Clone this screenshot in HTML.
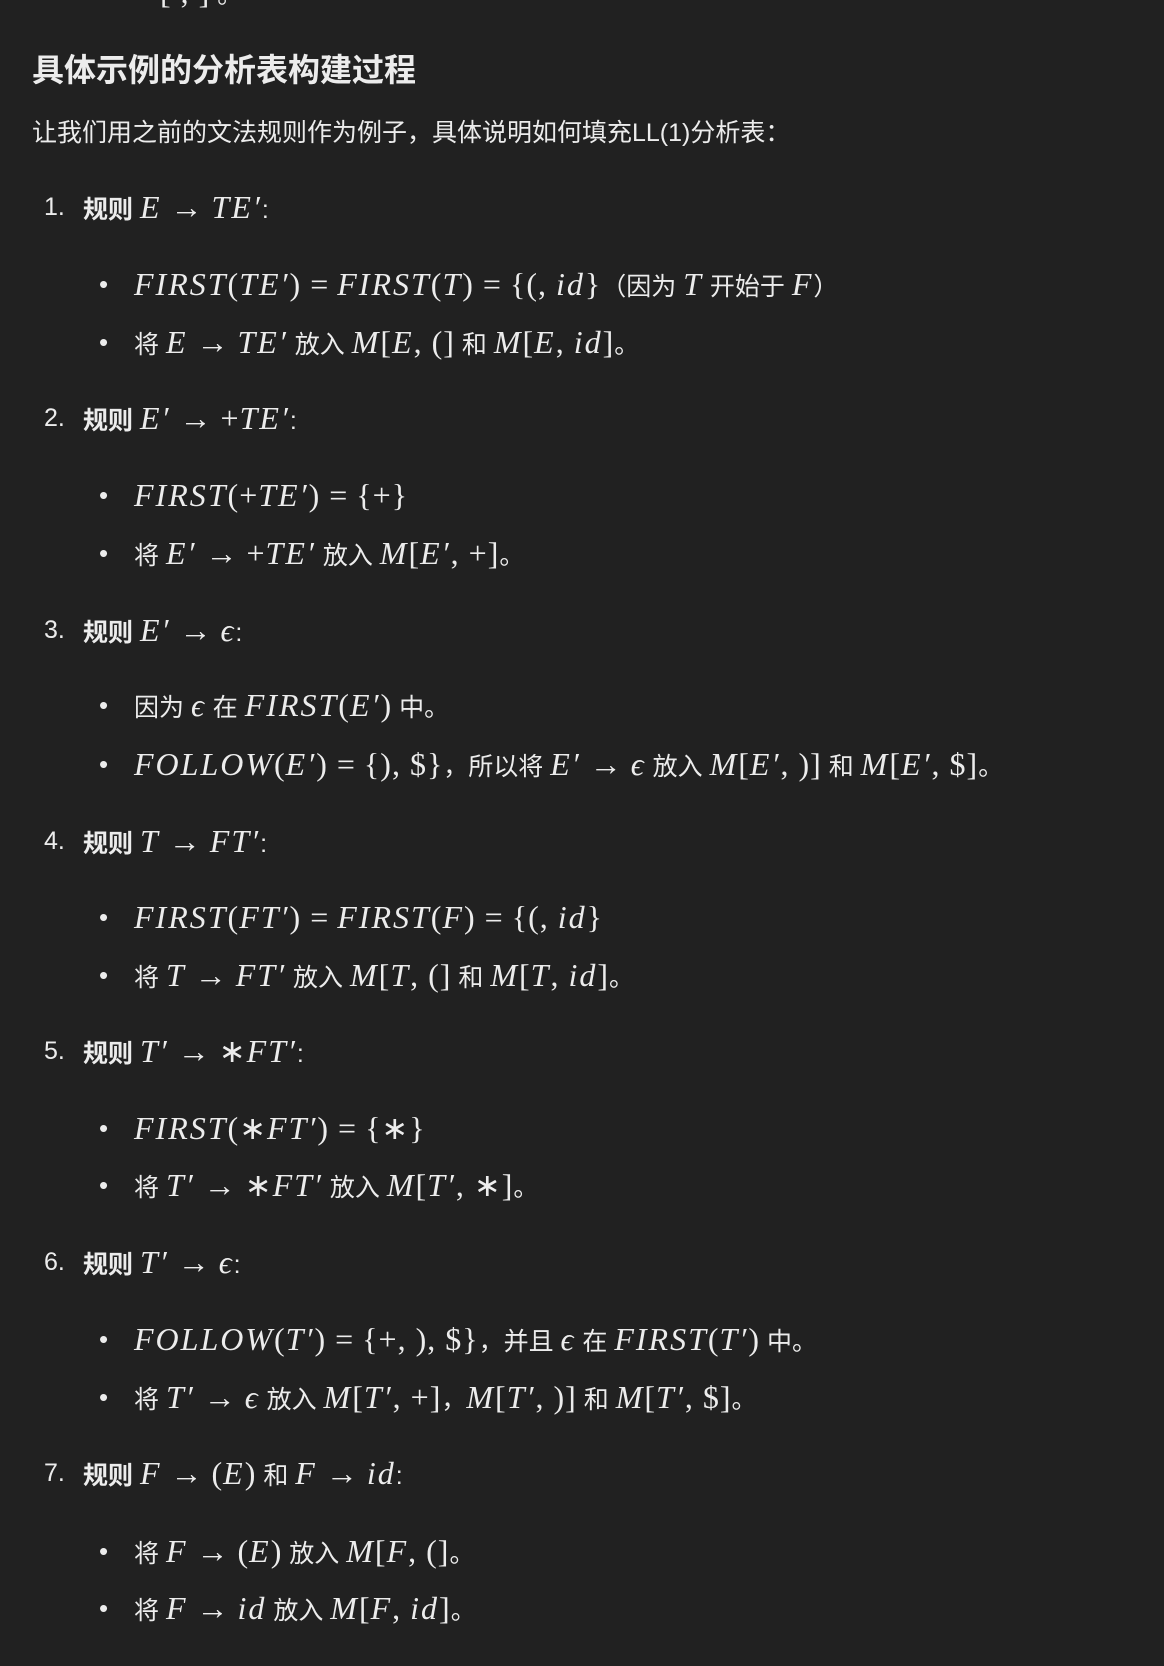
<!DOCTYPE html>
<html><head><meta charset="utf-8"><style>
html,body{margin:0;padding:0;background:#212121;}
body{width:1164px;height:1666px;position:relative;overflow:hidden;color:#ececec;font-family:"Liberation Sans","Noto Sans CJK SC",sans-serif;font-size:25px;}
.l{position:absolute;left:0;height:40px;line-height:40px;white-space:nowrap;}
.m{font-family:"Liberation Serif",serif;font-style:italic;font-size:32px;letter-spacing:2px;}
.u{font-family:"Liberation Serif",serif;font-style:normal;font-size:32px;letter-spacing:1px;}
.o{font-family:"Liberation Serif",serif;font-style:normal;font-size:32px;margin:0 9px;}
.n{position:absolute;left:44px;}
.t{position:absolute;left:83px;}
.b{position:absolute;left:99px;font-size:26px;}
.bt{position:absolute;left:134px;}
h2{position:absolute;left:32px;top:50px;margin:0;font-size:32px;font-weight:bold;line-height:40px;}
</style></head><body>
<div class="l" style="top:-28px;left:160px"><span class="u">[ , ]</span> 。</div>
<h2>具体示例的分析表构建过程</h2>
<div class="l" style="top:113px;left:32px">让我们用之前的文法规则作为例子，具体说明如何填充LL(1)分析表：</div>

<div class="l" style="top:187px;width:1164px"><span class="n">1.</span><span class="t"><b>规则</b> <span class="m">E</span><span class="o">→</span><span class="m">TE′</span>:</span></div>
<div class="l" style="top:264px;width:1164px"><span class="b">•</span><span class="bt"><span class="m">FIRST</span><span class="u">(</span><span class="m">TE′</span><span class="u">)</span><span class="o">=</span><span class="m">FIRST</span><span class="u">(</span><span class="m">T</span><span class="u">)</span><span class="o">=</span><span class="u">{(, </span><span class="m">id</span><span class="u">}</span>（因为 <span class="m">T</span> 开始于 <span class="m">F</span>）</span></div>
<div class="l" style="top:322px;width:1164px"><span class="b">•</span><span class="bt">将 <span class="m">E</span><span class="o">→</span><span class="m">TE′</span> 放入 <span class="m">M</span><span class="u">[</span><span class="m">E</span><span class="u">, (]</span> 和 <span class="m">M</span><span class="u">[</span><span class="m">E</span><span class="u">, </span><span class="m">id</span><span class="u">]</span>。</span></div>

<div class="l" style="top:398px;width:1164px"><span class="n">2.</span><span class="t"><b>规则</b> <span class="m">E′</span><span class="o">→</span><span class="u">+</span><span class="m">TE′</span>:</span></div>
<div class="l" style="top:475px;width:1164px"><span class="b">•</span><span class="bt"><span class="m">FIRST</span><span class="u">(+</span><span class="m">TE′</span><span class="u">)</span><span class="o">=</span><span class="u">{+}</span></span></div>
<div class="l" style="top:533px;width:1164px"><span class="b">•</span><span class="bt">将 <span class="m">E′</span><span class="o">→</span><span class="u">+</span><span class="m">TE′</span> 放入 <span class="m">M</span><span class="u">[</span><span class="m">E′</span><span class="u">, +]</span>。</span></div>

<div class="l" style="top:610px;width:1164px"><span class="n">3.</span><span class="t"><b>规则</b> <span class="m">E′</span><span class="o">→</span><span class="m">ϵ</span>:</span></div>
<div class="l" style="top:685px;width:1164px"><span class="b">•</span><span class="bt">因为 <span class="m">ϵ</span> 在 <span class="m">FIRST</span><span class="u">(</span><span class="m">E′</span><span class="u">)</span> 中。</span></div>
<div class="l" style="top:744px;width:1164px"><span class="b">•</span><span class="bt"><span class="m">FOLLOW</span><span class="u">(</span><span class="m">E′</span><span class="u">)</span><span class="o">=</span><span class="u">{), $}</span>，所以将 <span class="m">E′</span><span class="o">→</span><span class="m">ϵ</span> 放入 <span class="m">M</span><span class="u">[</span><span class="m">E′</span><span class="u">, )]</span> 和 <span class="m">M</span><span class="u">[</span><span class="m">E′</span><span class="u">, $]</span>。</span></div>

<div class="l" style="top:821px;width:1164px"><span class="n">4.</span><span class="t"><b>规则</b> <span class="m">T</span><span class="o">→</span><span class="m">FT′</span>:</span></div>
<div class="l" style="top:897px;width:1164px"><span class="b">•</span><span class="bt"><span class="m">FIRST</span><span class="u">(</span><span class="m">FT′</span><span class="u">)</span><span class="o">=</span><span class="m">FIRST</span><span class="u">(</span><span class="m">F</span><span class="u">)</span><span class="o">=</span><span class="u">{(, </span><span class="m">id</span><span class="u">}</span></span></div>
<div class="l" style="top:955px;width:1164px"><span class="b">•</span><span class="bt">将 <span class="m">T</span><span class="o">→</span><span class="m">FT′</span> 放入 <span class="m">M</span><span class="u">[</span><span class="m">T</span><span class="u">, (]</span> 和 <span class="m">M</span><span class="u">[</span><span class="m">T</span><span class="u">, </span><span class="m">id</span><span class="u">]</span>。</span></div>

<div class="l" style="top:1031px;width:1164px"><span class="n">5.</span><span class="t"><b>规则</b> <span class="m">T′</span><span class="o">→</span><span class="u">∗</span><span class="m">FT′</span>:</span></div>
<div class="l" style="top:1108px;width:1164px"><span class="b">•</span><span class="bt"><span class="m">FIRST</span><span class="u">(∗</span><span class="m">FT′</span><span class="u">)</span><span class="o">=</span><span class="u">{∗}</span></span></div>
<div class="l" style="top:1165px;width:1164px"><span class="b">•</span><span class="bt">将 <span class="m">T′</span><span class="o">→</span><span class="u">∗</span><span class="m">FT′</span> 放入 <span class="m">M</span><span class="u">[</span><span class="m">T′</span><span class="u">, ∗]</span>。</span></div>

<div class="l" style="top:1242px;width:1164px"><span class="n">6.</span><span class="t"><b>规则</b> <span class="m">T′</span><span class="o">→</span><span class="m">ϵ</span>:</span></div>
<div class="l" style="top:1319px;width:1164px"><span class="b">•</span><span class="bt"><span class="m">FOLLOW</span><span class="u">(</span><span class="m">T′</span><span class="u">)</span><span class="o">=</span><span class="u">{+, ), $}</span>，并且 <span class="m">ϵ</span> 在 <span class="m">FIRST</span><span class="u">(</span><span class="m">T′</span><span class="u">)</span> 中。</span></div>
<div class="l" style="top:1377px;width:1164px"><span class="b">•</span><span class="bt">将 <span class="m">T′</span><span class="o">→</span><span class="m">ϵ</span> 放入 <span class="m">M</span><span class="u">[</span><span class="m">T′</span><span class="u">, +]</span>，<span class="m">M</span><span class="u">[</span><span class="m">T′</span><span class="u">, )]</span> 和 <span class="m">M</span><span class="u">[</span><span class="m">T′</span><span class="u">, $]</span>。</span></div>

<div class="l" style="top:1453px;width:1164px"><span class="n">7.</span><span class="t"><b>规则</b> <span class="m">F</span><span class="o">→</span><span class="u">(</span><span class="m">E</span><span class="u">)</span> 和 <span class="m">F</span><span class="o">→</span><span class="m">id</span>:</span></div>
<div class="l" style="top:1531px;width:1164px"><span class="b">•</span><span class="bt">将 <span class="m">F</span><span class="o">→</span><span class="u">(</span><span class="m">E</span><span class="u">)</span> 放入 <span class="m">M</span><span class="u">[</span><span class="m">F</span><span class="u">, (]</span>。</span></div>
<div class="l" style="top:1588px;width:1164px"><span class="b">•</span><span class="bt">将 <span class="m">F</span><span class="o">→</span><span class="m">id</span> 放入 <span class="m">M</span><span class="u">[</span><span class="m">F</span><span class="u">, </span><span class="m">id</span><span class="u">]</span>。</span></div>
</body></html>
